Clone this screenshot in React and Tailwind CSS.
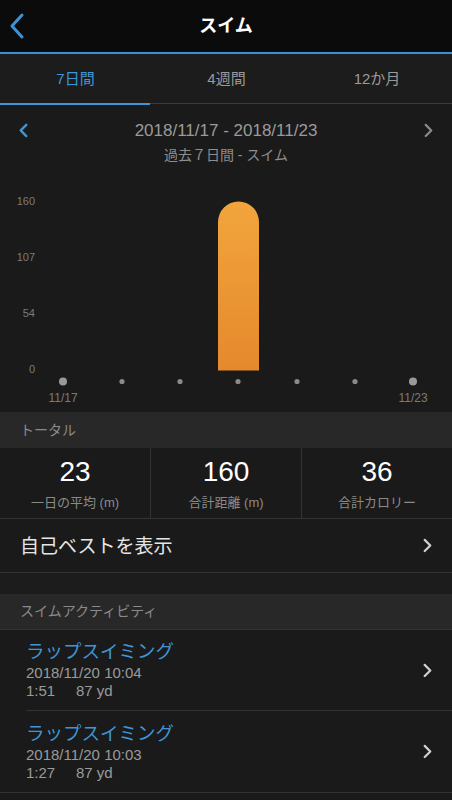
import React from "react";

const FONT = { fontFamily: '"Liberation Sans", "Noto Sans CJK JP", sans-serif' };

function Chevron({ dir = "right", className = "", size = 14, stroke = 2.2 }) {
  const d = dir === "right" ? "M4 2 L10 8 L4 14" : "M10 2 L4 8 L10 14";
  return (
    <svg width={size} height={size * 1.15} viewBox="0 0 14 16" className={className}>
      <path d={d} fill="none" stroke="currentColor" strokeWidth={stroke} strokeLinecap="round" strokeLinejoin="round" />
    </svg>
  );
}

function Chart() {
  const dots = [63, 122, 180, 238, 297, 355, 413];
  return (
    <svg width="452" height="243" viewBox="0 0 452 243" className="block">
      <defs>
        <linearGradient id="bar" x1="0" y1="0" x2="0" y2="1">
          <stop offset="0" stopColor="#f2a53c" />
          <stop offset="1" stopColor="#e5892d" />
        </linearGradient>
      </defs>
      {[["160", 32], ["107", 88], ["54", 144], ["0", 200]].map(([t, y]) => (
        <text key={t} x="35" y={y + 4} textAnchor="end" fontSize="11" fill="#7a7a7a" style={FONT}>{t}</text>
      ))}
      <path d="M218 201.5 L218 53 A20.5 20.5 0 0 1 259 53 L259 201.5 Z" fill="url(#bar)" />
      {dots.map((x, i) => (
        <circle key={x} cx={x} cy="212.5" r={i === 0 || i === 6 ? 4 : 2.6} fill={i === 0 || i === 6 ? "#9a9a9a" : "#8a8a8a"} />
      ))}
      <text x="63" y="233" textAnchor="middle" fontSize="12" fill="#7a7a7a" style={FONT}>11/17</text>
      <text x="413" y="233" textAnchor="middle" fontSize="12" fill="#7a7a7a" style={FONT}>11/23</text>
    </svg>
  );
}

function Stat({ value, label, border }) {
  return (
    <div className={`flex-1 flex flex-col items-center pt-[7px] ${border ? "border-l border-[#333]" : ""}`}>
      <div className="text-[28px] leading-[34px] text-white">{value}</div>
      <div className="text-[13px] leading-[20px] text-[#8a8a8a] mt-[4px]">{label}</div>
    </div>
  );
}

function Activity({ time, dur, dist, last }) {
  return (
    <div className="pl-[26px]">
      <div className={`flex items-center h-[81px] ${last ? "" : "border-b border-[#333]"}`}>
        <div className="flex-1 pt-[1px]">
          <div className="text-[18.5px] leading-[22px] text-[#3f95d6]">ラップスイミング</div>
          <div className="text-[15px] leading-[19px] text-[#9a9a9a]">{time}</div>
          <div className="text-[15px] leading-[18px] text-[#9a9a9a] flex">
            <span className="w-[50px]">{dur}</span>
            <span>{dist}</span>
          </div>
        </div>
        <Chevron className="text-[#d0d0d0] mr-[18px]" size={13} stroke={2.4} />
      </div>
    </div>
  );
}

export default function App() {
  return (
    <div className="w-[452px] h-[800px] bg-[#1a1a1a] overflow-hidden" style={FONT}>
      {/* header */}
      <div className="h-[52px] bg-[#0b0b0b] relative flex items-center justify-center">
        <svg width="18" height="28" viewBox="0 0 18 28" className="absolute left-[8px] top-[12px]">
          <path d="M14 3 L4 14 L14 25" fill="none" stroke="#3d93d4" strokeWidth="3" strokeLinecap="round" strokeLinejoin="round" />
        </svg>
        <div className="text-[18px] font-bold text-white">スイム</div>
      </div>
      <div className="h-[2px] bg-[#3d8fcf]" />
      {/* tabs */}
      <div className="h-[49px] bg-[#1c1c1c] flex items-center text-[15px] text-[#9a9a9a]">
        <div className="w-[151px] text-center text-[#3f95d6] pt-[2px]">7日間</div>
        <div className="w-[151px] text-center pt-[2px]">4週間</div>
        <div className="w-[150px] text-center pt-[2px]">12か月</div>
      </div>
      <div className="flex h-[2px]">
        <div className="w-[150px] bg-[#3f95d6]" />
        <div className="flex-1 flex flex-col"><div className="h-[1px] bg-[#3a3a3a]" /></div>
      </div>
      {/* date row */}
      <div className="h-[64px] relative flex flex-col items-center pt-[15px]">
        <Chevron dir="left" className="absolute left-[17px] top-[18px] text-[#3f95d6]" size={13} stroke={2.6} />
        <Chevron dir="right" className="absolute right-[17px] top-[18px] text-[#8a8a8a]" size={13} stroke={2.4} />
        <div className="text-[17px] leading-[22px] text-[#9a9a9a]">2018/11/17 - 2018/11/23</div>
        <div className="text-[14px] leading-[20px] text-[#8e8e8e] mt-[3px]">過去７日間 - スイム</div>
      </div>
      {/* chart */}
      <Chart />
      {/* total header */}
      <div className="h-[36px] bg-[#282828] flex items-center pl-[20px] text-[14px] text-[#8a8a8a]">トータル</div>
      {/* stats */}
      <div className="h-[71px] flex border-b border-[#333] bg-[#1a1a1a]">
        <Stat value="23" label="一日の平均 (m)" />
        <Stat value="160" label="合計距離 (m)" border />
        <Stat value="36" label="合計カロリー" border />
      </div>
      {/* personal best */}
      <div className="h-[54px] flex items-center pl-[20px] border-b border-[#333]">
        <div className="flex-1 text-[19px] text-[#e6e6e6] pt-[4px]">自己ベストを表示</div>
        <Chevron className="text-[#d0d0d0] mr-[18px]" size={13} stroke={2.4} />
      </div>
      <div className="h-[21px] bg-[#1c1c1c]" />
      {/* activity header */}
      <div className="h-[36px] bg-[#282828] flex items-center pl-[20px] text-[14px] text-[#8a8a8a] border-b border-[#333]">スイムアクティビティ</div>
      <Activity time="2018/11/20 10:04" dur="1:51" dist="87 yd" />
      <Activity time="2018/11/20 10:03" dur="1:27" dist="87 yd" last />
      <div className="h-[1px] bg-[#333]" />
    </div>
  );
}
